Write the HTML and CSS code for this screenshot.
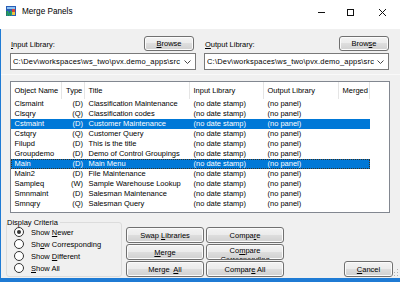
FILE: index.html
```html
<!DOCTYPE html>
<html lang="en">
<head>
<meta charset="utf-8">
<title>Merge Panels</title>
<link rel="stylesheet" href="styles.css">
</head>
<body>
<div class="window">
  <header class="titlebar">
    <svg class="appicon" width="10" height="10" viewBox="0 0 10 10">
      <rect x="0" y="0" width="10" height="10" fill="#2a5db5"/>
      <rect x="1" y="1" width="8" height="2" fill="#8ec3f2"/>
      <rect x="6" y="3" width="3" height="3" fill="#d9463a"/>
      <rect x="6" y="6" width="3" height="3" fill="#f0c640"/>
      <text x="0.3" y="9.6" class="icon-m">M</text>
    </svg>
    <span class="title">Merge Panels</span>
    <div class="controls">
      <svg class="ctl" width="7" height="1" viewBox="0 0 7 1"><rect width="7" height="1" fill="#111"/></svg>
      <svg class="ctl ctl-max" width="7" height="7" viewBox="0 0 7 7"><rect x="0.5" y="0.5" width="6" height="6" fill="none" stroke="#111"/></svg>
      <svg class="ctl ctl-close" width="7" height="7" viewBox="0 0 7 7"><path d="M0 0L7 7M7 0L0 7" stroke="#111" stroke-width="1"/></svg>
    </div>
  </header>

  <main class="client">
    <section class="top">
      <div class="lib">
        <div class="lib-head">
          <span class="lib-label"><span class="ak">I</span>nput Library:</span>
          <button class="btn btn-browse btn-browse-in"><span class="ak">B</span>rowse</button>
        </div>
        <div class="combo">
          <span class="combo-text">C:\Dev\workspaces\ws_two\pvx.demo_apps\src</span>
          <svg class="chev" width="7" height="4" viewBox="0 0 7 4"><path d="M0.5 0.5L3.5 3.5L6.5 0.5" fill="none" stroke="#444"/></svg>
        </div>
      </div>
      <div class="lib">
        <div class="lib-head">
          <span class="lib-label"><span class="ak">O</span>utput Library:</span>
          <button class="btn btn-browse">Brow<span class="ak">s</span>e</button>
        </div>
        <div class="combo">
          <span class="combo-text">C:\Dev\workspaces\ws_two\pvx.demo_apps\src</span>
          <svg class="chev" width="7" height="4" viewBox="0 0 7 4"><path d="M0.5 0.5L3.5 3.5L6.5 0.5" fill="none" stroke="#444"/></svg>
        </div>
      </div>
    </section>

    <section class="list">
      <div class="row head">
        <span class="cell">Object Name</span><span class="cell htype">Type</span><span class="cell">Title</span><span class="cell">Input Library</span><span class="cell">Output Library</span><span class="cell">Merged</span>
      </div>
      <div class="row"><span class="cell">Clsmaint</span><span class="cell type">(D)</span><span class="cell">Classification Maintenance</span><span class="cell">(no date stamp)</span><span class="cell">(no panel)</span><span class="cell"></span></div>
      <div class="row"><span class="cell">Clsqry</span><span class="cell type">(Q)</span><span class="cell">Classification codes</span><span class="cell">(no date stamp)</span><span class="cell">(no panel)</span><span class="cell"></span></div>
      <div class="row sel"><span class="cell">Cstmaint</span><span class="cell type">(D)</span><span class="cell">Customer Maintenance</span><span class="cell">(no date stamp)</span><span class="cell">(no panel)</span><span class="cell"></span></div>
      <div class="row"><span class="cell">Cstqry</span><span class="cell type">(Q)</span><span class="cell">Customer Query</span><span class="cell">(no date stamp)</span><span class="cell">(no panel)</span><span class="cell"></span></div>
      <div class="row"><span class="cell">Filupd</span><span class="cell type">(D)</span><span class="cell">This is the title</span><span class="cell">(no date stamp)</span><span class="cell">(no panel)</span><span class="cell"></span></div>
      <div class="row"><span class="cell">Groupdemo</span><span class="cell type">(D)</span><span class="cell">Demo of Control Groupings</span><span class="cell">(no date stamp)</span><span class="cell">(no panel)</span><span class="cell"></span></div>
      <div class="row sel focus"><span class="cell">Main</span><span class="cell type">(D)</span><span class="cell">Main Menu</span><span class="cell">(no date stamp)</span><span class="cell">(no panel)</span><span class="cell"></span></div>
      <div class="row"><span class="cell">Main2</span><span class="cell type">(D)</span><span class="cell">File Maintenance</span><span class="cell">(no date stamp)</span><span class="cell">(no panel)</span><span class="cell"></span></div>
      <div class="row"><span class="cell">Sampleq</span><span class="cell type">(W)</span><span class="cell">Sample Warehouse Lookup</span><span class="cell">(no date stamp)</span><span class="cell">(no panel)</span><span class="cell"></span></div>
      <div class="row"><span class="cell">Smnmaint</span><span class="cell type">(D)</span><span class="cell">Salesman Maintenance</span><span class="cell">(no date stamp)</span><span class="cell">(no panel)</span><span class="cell"></span></div>
      <div class="row"><span class="cell">Smnqry</span><span class="cell type">(Q)</span><span class="cell">Salesman Query</span><span class="cell">(no date stamp)</span><span class="cell">(no panel)</span><span class="cell"></span></div>
    </section>

    <section class="bottom">
      <fieldset class="group">
        <legend class="group-label">Display Criteria</legend>
        <div class="radios">
          <div class="radio"><span class="rb on"></span><span>Show <span class="ak">N</span>ewer</span></div>
          <div class="radio"><span class="rb"></span><span>Sh<span class="ak">o</span>w Corresponding</span></div>
          <div class="radio"><span class="rb"></span><span>Show <span class="ak">D</span>ifferent</span></div>
          <div class="radio"><span class="rb"></span><span><span class="ak">S</span>how All</span></div>
        </div>
      </fieldset>
      <div class="actions">
        <button class="btn">Swap <span class="ak">L</span>ibraries</button>
        <button class="btn">Compa<span class="ak">r</span>e</button>
        <button class="btn"><span class="ak">M</span>erge</button>
        <button class="btn btn-multi"><span class="multi-text">Co<span class="ak">m</span>pare Corresponding</span></button>
        <button class="btn">Merge&nbsp; <span class="ak">A</span>ll</button>
        <button class="btn">Compar<span class="ak">e</span> All</button>
      </div>
      <button class="btn cancel"><span class="ak">C</span>ancel</button>
    </section>

    <svg class="grip" width="8" height="8" viewBox="0 0 8 8">
      <rect x="6" y="0" width="1" height="1" fill="#b0b0b0"/>
      <rect x="3" y="3" width="1" height="1" fill="#b0b0b0"/>
      <rect x="6" y="3" width="1" height="1" fill="#b0b0b0"/>
      <rect x="0" y="6" width="1" height="1" fill="#b0b0b0"/>
      <rect x="3" y="6" width="1" height="1" fill="#b0b0b0"/>
      <rect x="6" y="6" width="1" height="1" fill="#b0b0b0"/>
    </svg>
  </main>
</div>
</body>
</html>
```

FILE: styles.css
```css
* { box-sizing: border-box; }

html, body {
  margin: 0;
  padding: 0;
}

body {
  width: 400px;
  height: 282px;
  overflow: hidden;
  font-family: "Liberation Sans", Arial, sans-serif;
  font-size: 7.5px;
  color: #000;
  background: #fff;
}

.window {
  width: 400px;
  height: 282px;
  display: flex;
  flex-direction: column;
}

/* ---------- title bar ---------- */
.titlebar {
  height: 29px;
  flex: none;
  display: flex;
  align-items: flex-start;
  padding-top: 6px;
  background: #fff;
}

.appicon {
  flex: none;
  margin-left: 6px;
}

.icon-m {
  font-family: "Liberation Sans", Arial, sans-serif;
  font-size: 7px;
  font-weight: bold;
  fill: #1fae3c;
}

.title {
  margin-left: 6px;
  font-size: 8.2px;
  line-height: 12px;
}

.controls {
  margin-left: auto;
  height: 12px;
  display: flex;
  align-items: center;
  padding-right: 14px;
}

.ctl { display: block; }
.ctl-max { margin-left: 22px; }
.ctl-close { margin-left: 25px; }

/* ---------- client ---------- */
.client {
  flex: 1;
  position: relative;
  display: flex;
  flex-direction: column;
  background: #f0f0f0;
  border-left: 1px solid #1f7bd4;
  border-bottom: 4px solid #1f7bd4;
}

.ak { text-decoration: underline; }

.top {
  flex: none;
  display: grid;
  grid-template-columns: 186px 185px;
  column-gap: 8px;
  padding: 6px 10px 4px 9px;
  border-bottom: 1px solid #f9f9f9;
}

.lib-head {
  height: 16px;
  display: flex;
  align-items: center;
  justify-content: space-between;
}

.lib-label {
  padding-left: 1px;
  line-height: 9px;
  margin-top: 2px;
}

.btn {
  font: inherit;
  color: #000;
  padding: 0;
  margin: 0;
  border: 1px solid #707070;
  border-radius: 3px;
  background: linear-gradient(#f3f3f3, #ebebeb 50%, #dedede 50%, #d0d0d0);
  box-shadow: inset 0 0 0 1px #fbfbfb;
  line-height: 9px;
  text-align: center;
  white-space: nowrap;
}

.btn-browse {
  width: 50px;
  height: 15px;
}

.btn-browse-in { margin-right: 2px; }

.combo {
  margin-top: 2px;
  height: 17px;
  display: flex;
  align-items: center;
  padding: 0 4px 0 2px;
  background: #fff;
  border: 1px solid #7a7a7a;
}

.combo-text {
  flex: 1;
  min-width: 0;
  overflow: hidden;
  white-space: nowrap;
  letter-spacing: 0.2px;
  line-height: 10px;
}

.chev {
  flex: none;
  margin-left: 3px;
}

/* ---------- list ---------- */
.list {
  flex: none;
  height: 132px;
  margin: 6px 10px 0 9px;
  background: #fff;
  border: 1px solid #828790;
  overflow: hidden;
}

.row {
  display: grid;
  grid-template-columns: 51px 23px 105px 74px 75px 31px;
  width: 359px;
  height: 10px;
  line-height: 10px;
  white-space: nowrap;
}

.cell {
  overflow: hidden;
  padding-left: 3.5px;
}

.head {
  height: 17px;
  line-height: 17px;
}

.head .cell { border-right: 1px solid #e5e5e5; }

.htype { padding-left: 4px; }

.type {
  text-align: right;
  padding-left: 0;
  padding-right: 2px;
}

.sel {
  background: #0078d7;
  color: #fff;
}

.focus {
  outline: 1px dotted #3a3020;
  outline-offset: -1px;
}

/* ---------- bottom ---------- */
.bottom {
  flex: 1;
  display: flex;
  padding: 0 7px 0 5px;
}

.group {
  flex: none;
  width: 116px;
  min-width: 0;
  margin: 5px 0 1px 0;
  padding: 0;
  border: 1px solid #dcdcdc;
  border-radius: 3px;
}

.group-label {
  padding: 0 2px 0 0;
  line-height: 9px;
}

.radios {
  margin-top: -1px;
  padding-left: 7px;
}

.radio {
  height: 12px;
  display: flex;
  align-items: center;
  white-space: nowrap;
}

.rb {
  flex: none;
  width: 10px;
  height: 10px;
  margin-right: 7px;
  border: 1px solid #333;
  border-radius: 50%;
  background: #fff;
  display: flex;
  align-items: center;
  justify-content: center;
}

.rb.on::after {
  content: "";
  width: 4px;
  height: 4px;
  border-radius: 50%;
  background: #333;
}

.actions {
  flex: none;
  margin: 14px 0 1px 4px;
  display: grid;
  grid-template-columns: 78px 78px;
  grid-template-rows: 16px 16px 16px;
  gap: 1px 2px;
}

.btn-multi {
  display: flex;
  flex-direction: column;
  align-items: center;
  justify-content: flex-start;
  padding-top: 1px;
  overflow: hidden;
  white-space: normal;
}

.multi-text {
  display: block;
  width: 60px;
  text-align: center;
}

.cancel {
  flex: none;
  margin-left: auto;
  align-self: flex-end;
  width: 49px;
  height: 16px;
  margin-bottom: 1px;
}

.grip {
  position: absolute;
  right: 1px;
  bottom: 1px;
}
```
